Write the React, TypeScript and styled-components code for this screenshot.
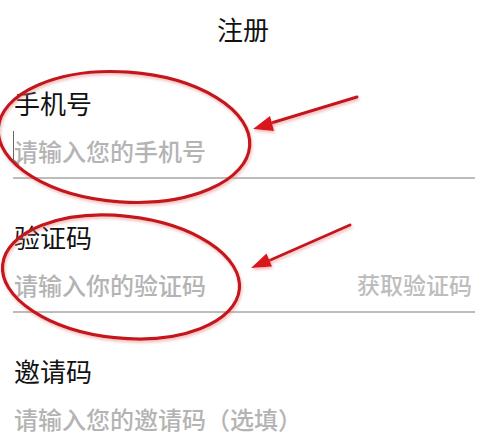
import styled, { createGlobalStyle } from 'styled-components'

const GlobalStyle = createGlobalStyle`
  html, body {
    margin: 0;
    padding: 0;
    background: #ffffff;
  }
  body {
    font-family: 'Noto Sans CJK SC', 'Noto Sans', sans-serif;
  }
`

interface IField {
  label: string
  placeholder: string
  action?: string
  withCaret?: boolean
  last?: boolean
}

const FIELDS: IField[] = [
  { label: '手机号', placeholder: '请输入您的手机号', withCaret: true },
  { label: '验证码', placeholder: '请输入你的验证码', action: '获取验证码' },
  { label: '邀请码', placeholder: '请输入您的邀请码（选填）', last: true },
]

function Field({ label, placeholder, action, withCaret, last }: IField) {
  return (
    <FieldBlock $last={last}>
      <Label>{label}</Label>
      <InputRow>
        <Input placeholder={placeholder} />
        {withCaret && <Caret />}
        {action && <ActionText>{action}</ActionText>}
      </InputRow>
    </FieldBlock>
  )
}

// red hand-drawn marks that sit on top of the screenshot
function Annotations() {
  return (
    <Overlay viewBox="0 0 482 443" width="482" height="443">
      <defs>
        <filter id="glow" x="-10%" y="-10%" width="120%" height="120%">
          <feGaussianBlur in="SourceAlpha" stdDeviation="1.6" />
          <feOffset dx="1" dy="1.5" result="b" />
          <feFlood floodColor="#e48080" floodOpacity="0.55" />
          <feComposite in2="b" operator="in" />
          <feMerge>
            <feMergeNode />
            <feMergeNode in="SourceGraphic" />
          </feMerge>
        </filter>
      </defs>
      <g filter="url(#glow)" stroke="#c4171d" fill="none" strokeLinecap="round">
        <ellipse cx="124" cy="137" rx="126" ry="65" strokeWidth="3.2" transform="rotate(4 124 137)" />
        <ellipse cx="121" cy="277" rx="119" ry="61" strokeWidth="3.2" transform="rotate(6 121 277)" />
        <line x1="357" y1="97" x2="268" y2="124" strokeWidth="3" />
        <line x1="350" y1="225" x2="266" y2="262" strokeWidth="3" />
      </g>
      <g filter="url(#glow)" fill="#d9141b">
        <polygon points="253,129 270,116 274,131" />
        <polygon points="251,268 266.5,253.6 272,266.4" />
      </g>
    </Overlay>
  )
}

export default function App() {
  return (
    <Page>
      <GlobalStyle />
      <Header>
        <Title>注册</Title>
      </Header>
      <Form>
        {FIELDS.map((f) => (
          <Field key={f.label} {...f} />
        ))}
      </Form>
      <Annotations />
    </Page>
  )
}

const Page = styled.div`
  position: relative;
  width: 482px;
  height: 443px;
  overflow: hidden;
  background: #ffffff;
`

const Header = styled.header`
  display: flex;
  justify-content: center;
  padding-top: 12px;
  height: 45px;
  box-sizing: border-box;
`

const Title = styled.h1`
  margin: 0 0 0 4px;
  font-size: 26px;
  font-weight: 400;
  line-height: 33px;
  color: #111111;
`

const Form = styled.div`
  display: flex;
  flex-direction: column;
  padding: 0 7px 0 13px;
`

const FieldBlock = styled.div<{ $last?: boolean }>`
  display: flex;
  flex-direction: column;
  padding-top: 41px;
  border-bottom: ${(p) => (p.$last ? 'none' : '2px solid #bcbcbc')};
`

const Label = styled.div`
  padding-left: 1px;
  font-size: 26px;
  line-height: 34px;
  color: #121212;
`

const InputRow = styled.div`
  position: relative;
  display: flex;
  align-items: center;
  height: 57px;
  padding-top: 3px;
  box-sizing: border-box;
`

const Input = styled.input`
  flex: 1;
  min-width: 0;
  border: none;
  outline: none;
  padding: 0 0 0 1px;
  background: transparent;
  font-family: 'Noto Sans CJK SC', 'Noto Sans', sans-serif;
  font-size: 24px;
  font-weight: 500;
  color: #333333;

  &::placeholder {
    color: #b4b4b4;
  }
`

const Caret = styled.span`
  position: absolute;
  z-index: 1;
  left: 0;
  top: 11px;
  width: 1px;
  height: 30px;
  background: #6a6a6a;

  &::after {
    content: '';
    position: absolute;
    left: 0;
    bottom: 1px;
    width: 8px;
    height: 1px;
    background: #6a6a6a;
    transform: rotate(40deg);
    transform-origin: left center;
  }
`

const ActionText = styled.span`
  padding-right: 3px;
  font-size: 23px;
  font-weight: 500;
  color: #bdbdbd;
  white-space: nowrap;
`

const Overlay = styled.svg`
  position: absolute;
  left: 0;
  top: 0;
  pointer-events: none;
`
